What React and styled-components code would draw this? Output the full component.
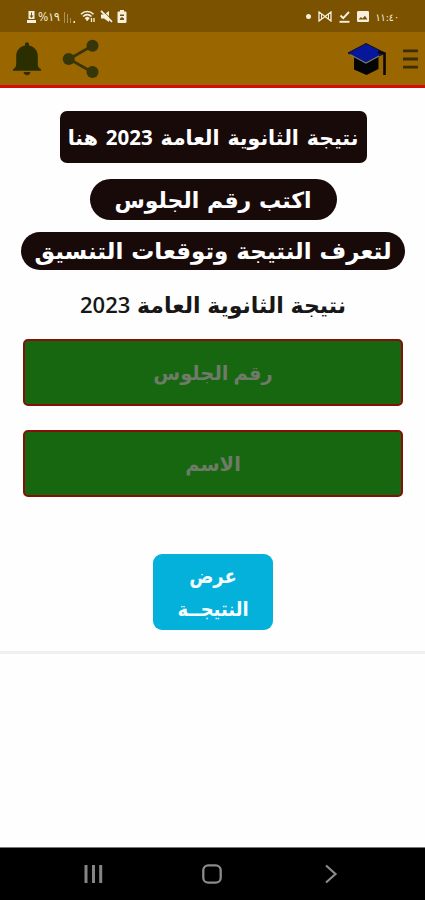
import styled, { createGlobalStyle } from "styled-components";

const GlobalStyle = createGlobalStyle`
  * {
    box-sizing: border-box;
  }

  body {
    margin: 0;
    background: #fefefe;
    font-family: "Open Sans", "DejaVu Sans", sans-serif;
  }
`;

const Screen = styled.div`
  display: flex;
  flex-direction: column;
  width: 425px;
  height: 900px;
  overflow: hidden;
`;

const StatusBar = styled.div`
  display: flex;
  justify-content: space-between;
  align-items: center;
  height: 32px;
  padding: 1px 26px 0 27px;
  background: #7b5200;
  color: #f7efdf;
`;

const StatusGroup = styled.div`
  display: flex;
  align-items: center;
  gap: ${(props) => props.$gap};
`;

const StatusText = styled.span`
  font-family: "DejaVu Sans Condensed", "DejaVu Sans", sans-serif;
  font-size: ${(props) => props.$size};
  line-height: 16px;
  white-space: nowrap;
`;

const Header = styled.header`
  display: flex;
  justify-content: space-between;
  align-items: center;
  height: 56px;
  padding: 0 7px 0 12px;
  background: #996600;
  border-bottom: 3px solid #d90a08;
`;

const HeaderGroup = styled.div`
  display: flex;
  align-items: center;
  gap: ${(props) => props.$gap};
`;

const Content = styled.main`
  display: flex;
  flex-direction: column;
  align-items: center;
  height: 566px;
  padding: 23px 0 0 1px;
  border-bottom: 3px solid #f0f0f0;
`;

const Banner = styled.div`
  display: flex;
  justify-content: center;
  align-items: center;
  width: ${(props) => props.$width};
  height: ${(props) => props.$height};
  margin-top: ${(props) => props.$top || "0"};
  border-radius: ${(props) => props.$radius || "21px"};
  background: #190a0a;
  color: #fff;
`;

const Label = styled.span`
  font-size: ${(props) => props.$size};
  font-weight: 700;
  line-height: 1.3;
  word-spacing: ${(props) => props.$space};
  white-space: nowrap;
`;

const Title = styled.h1`
  margin: 15px 0 0;
  height: 38px;
  color: #171717;
  font-size: 22px;
  font-weight: 600;
  line-height: 38px;
  word-spacing: 1px;
  white-space: nowrap;
`;

const Field = styled.input`
  width: 380px;
  height: 67px;
  margin: ${(props) => props.$top} 0 0;
  padding: 0;
  border: 2px solid #851008;
  border-radius: 5px;
  background: #176610;
  color: #fff;
  font-family: inherit;
  font-size: 19.5px;
  font-weight: 700;
  text-align: center;
  outline: none;

  &::placeholder {
    color: #6e7b68;
    opacity: 1;
  }
`;

const SubmitButton = styled.button`
  width: 120px;
  height: 76px;
  margin-top: 57px;
  padding: 2px 0 0;
  border: 0;
  border-radius: 9px;
  background: #03b1da;
  color: #f4fdff;
  font-family: "DejaVu Sans Condensed", "DejaVu Sans", sans-serif;
  font-size: 20px;
  font-weight: 700;
  line-height: 33px;
`;

const NavBar = styled.nav`
  display: flex;
  align-items: center;
  justify-content: space-between;
  height: 53px;
  margin-top: auto;
  padding: 0 84px 0 84px;
  background: #000;
  border-top: 1px solid #777;
`;

const BatteryIcon = () => (
  <svg width="10" height="13" viewBox="0 0 10 13" fill="currentColor">
    <path d="M3 0h4v1.500h1.500a1 1 0 0 1 1 1V12a1 1 0 0 1-1 1h-7a1 1 0 0 1-1-1V2.500a1 1 0 0 1 1-1H3z" />
    <path d="M3 4.500h4V6H3zM3 10V8.500l2-1.500 2 1.500V10z" fill="#7b5200" />
  </svg>
);

const ChargeIcon = () => (
  <svg width="9" height="12" viewBox="0 0 9 12" fill="currentColor">
    <path d="M1.500 0h6v8h-6zM0 9h9v3H0z" />
    <path d="M4 1.500h1v3h1.500l-2 2.500-2-2.500H4z" fill="#7b5200" />
  </svg>
);

const SignalIcon = () => (
  <svg width="12" height="12" viewBox="0 0 12 12" fill="currentColor">
    <path d="M0 1h1v11H0zM3 3h1v9H3zM6 7h1v5H6z" opacity="0.4" />
    <path d="M9.500 10h1.500v2H9.500z" />
  </svg>
);

const WifiIcon = () => (
  <svg width="16" height="13" viewBox="0 0 16 13" fill="none" stroke="currentColor">
    <path d="M1 4.200C4.500.6 10 .6 13.500 4.200" strokeWidth="1.600" />
    <path d="M3 6.500c2.500-2.500 6-2.500 8.500 0" strokeWidth="1.600" />
    <path d="M5 8c1.500-1.200 3-1.200 4.500 0L7.200 11z" fill="currentColor" strokeWidth="0.500" />
    <path d="M11.500 8v4M14 8v4" strokeWidth="1.300" />
  </svg>
);

const MuteIcon = () => (
  <svg width="13" height="13" viewBox="0 0 13 13" fill="currentColor">
    <path d="M1 4.500h3L9 1v11L4 8.500H1z" />
    <path d="M3 .8l9.500 9.500" stroke="#7b5200" strokeWidth="1" />
    <path d="M1 .8l11 11" stroke="currentColor" strokeWidth="1.800" />
  </svg>
);

const MailIcon = () => (
  <svg width="14" height="11" viewBox="0 0 14 11" fill="none" stroke="currentColor" strokeWidth="1.300">
    <path d="M1 10V1l6 4.500L13 1v9L7 5.500z" />
    <path d="M3.500 3v5M10.500 3v5" strokeWidth="1" />
  </svg>
);

const CheckIcon = () => (
  <svg width="11" height="12" viewBox="0 0 11 12" fill="none" stroke="currentColor">
    <path d="M1.500 4.500l2.700 2.700L10 1" strokeWidth="1.900" />
    <path d="M.5 10.800h10" strokeWidth="1.900" />
  </svg>
);

const ImageIcon = () => (
  <svg width="12" height="11" viewBox="0 0 12 11" fill="currentColor">
    <rect width="12" height="11" rx="1.200" />
    <path d="M1.500 8.500l2.500-2.500 1.500 1.500L8 4.800l2.500 3.700z" fill="#7b5200" />
  </svg>
);

const DotIcon = () => (
  <svg width="5" height="5" viewBox="0 0 5 5" fill="currentColor">
    <circle cx="2.500" cy="2.500" r="2.500" />
  </svg>
);

const BellIcon = () => (
  <svg width="30" height="34" viewBox="0 0 30 34" fill="#2b2f00">
    <path d="M13 3.500V2.200a2 2 0 0 1 4 0v1.300c5.500 1 8.800 5.300 8.800 10.500V22c0 2.500 1 4.200 3.200 5.200v1.600H1v-1.600c2.200-1 3.200-2.700 3.200-5.200v-8c0-5.200 3.300-9.500 8.800-10.500z" />
    <path d="M11.500 30h7c-.5 2.200-1.800 3.300-3.500 3.300s-3-1.100-3.500-3.300z" />
  </svg>
);

const ShareIcon = () => (
  <svg width="38" height="40" viewBox="0 0 38 40" fill="#37350a">
    <path d="M30 7L7 20l23 13" fill="none" stroke="#37350a" strokeWidth="2.600" />
    <circle cx="30.500" cy="6.800" r="6" />
    <circle cx="6.700" cy="20" r="6" />
    <circle cx="30.500" cy="33" r="6" />
  </svg>
);

const CapIcon = () => (
  <svg width="40" height="34" viewBox="0 0 40 34">
    <path d="M7 13v14.500L19.500 33 31.500 27V13z" fill="#050505" />
    <path d="M1 11L19 1.500 38 11 19 20.500z" fill="#07179b" stroke="#111018" strokeWidth="1" />
    <path d="M3 12.500l16 8.500 13-7" fill="none" stroke="#777b76" strokeWidth="1.200" />
    <path d="M31 10l6.500 1.500V33" fill="none" stroke="#0a0906" strokeWidth="2.600" />
  </svg>
);

const MenuIcon = () => (
  <svg width="15" height="20" viewBox="0 0 15 20" fill="#3d2c0a">
    <path d="M0 .5h15v2.800H0zM0 8.600h15v2.800H0zM0 16.700h15v2.800H0z" />
  </svg>
);

const RecentsIcon = () => (
  <svg width="19" height="20" viewBox="0 0 19 20" fill="#858585">
    <path d="M.5 1h3v18h-3zM8 1h3v18H8zM15.200 1h3v18h-3z" />
  </svg>
);

const HomeIcon = () => (
  <svg width="20" height="20" viewBox="0 0 20 20" fill="none">
    <rect x="1.300" y="1.300" width="17.400" height="17.400" rx="5" stroke="#8b8b8b" strokeWidth="2.300" />
  </svg>
);

const BackIcon = () => (
  <svg width="20" height="20" viewBox="0 0 20 20" fill="none">
    <path d="M5 1.500L14.500 10 5 18.500" stroke="#8b8b8b" strokeWidth="2.200" />
  </svg>
);

const App = () => {
  return (
    <Screen>
      <GlobalStyle />

      <StatusBar>
        <StatusGroup $gap="4px">
          <StatusGroup $gap="2px">
            <ChargeIcon />
            <StatusText $size="12px">%١٩</StatusText>
          </StatusGroup>
          <SignalIcon />
          <WifiIcon />
          <MuteIcon />
          <BatteryIcon />
        </StatusGroup>
        <StatusGroup $gap="7px">
          <DotIcon />
          <MailIcon />
          <CheckIcon />
          <ImageIcon />
          <StatusText $size="10.5px">١١:٤٠</StatusText>
        </StatusGroup>
      </StatusBar>

      <Header>
        <HeaderGroup $gap="20px">
          <BellIcon />
          <ShareIcon />
        </HeaderGroup>
        <HeaderGroup $gap="16px">
          <CapIcon />
          <MenuIcon />
        </HeaderGroup>
      </Header>

      <Content dir="rtl">
        <Banner $width="307px" $height="52px" $radius="7px">
          <Label $size="20.5px" $space="2.5px">
            نتيجة الثانوية العامة 2023 هنا
          </Label>
        </Banner>
        <Banner $width="247px" $height="41px" $top="16px">
          <Label $size="22px" $space="2px">
            اكتب رقم الجلوس
          </Label>
        </Banner>
        <Banner $width="384px" $height="38px" $top="12px">
          <Label $size="23px" $space="2px">
            لتعرف النتيجة وتوقعات التنسيق
          </Label>
        </Banner>

        <Title>نتيجة الثانوية العامة 2023</Title>

        <Field $top="16px" placeholder="رقم الجلوس" />
        <Field $top="24px" placeholder="الاسم" />

        <SubmitButton>
          عرض
          <br />
          النتيجــة
        </SubmitButton>
      </Content>

      <NavBar>
        <RecentsIcon />
        <HomeIcon />
        <BackIcon />
      </NavBar>
    </Screen>
  );
};

export default App;
